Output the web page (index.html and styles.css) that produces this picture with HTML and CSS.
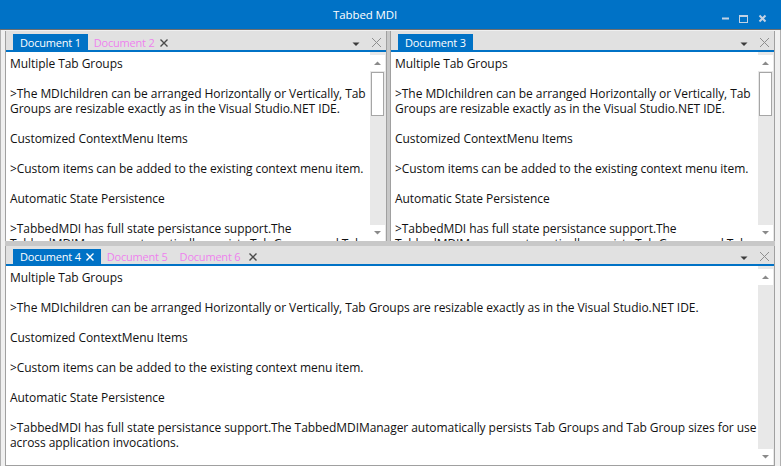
FILE: index.html
```html
<!DOCTYPE html>
<html>
<head>
<meta charset="utf-8">
<link rel="stylesheet" href="styles.css">
</head>
<body>
<div class="window">
  <div class="titlebar">
    <span class="title">Tabbed MDI</span>
    <div class="caption">
      <div class="cbtn"><svg width="19" height="15" viewBox="0 0 19 15"><rect x="7" y="6.5" width="7" height="2" fill="#c2d2e4"/></svg></div>
      <div class="cbtn"><svg width="19" height="15" viewBox="0 0 19 15"><rect x="5.5" y="4.5" width="8" height="7" fill="none" stroke="#c2d2e4" stroke-width="1"/><rect x="5" y="4" width="9" height="2" fill="#c2d2e4"/></svg></div>
      <div class="cbtn"><svg width="19" height="15" viewBox="0 0 19 15"><path d="M6.5 4.5 L12.5 10.5 M12.5 4.5 L6.5 10.5" stroke="#c2d2e4" stroke-width="2" fill="none"/></svg></div>
    </div>
  </div>
  <div class="client">
    <div class="top-row">
      <div class="group left">
        <div class="strip">
          <div class="tab active">Document 1</div>
          <div class="tab inactive">Document 2<svg class="tx" width="8" height="8" viewBox="0 0 8 8"><path d="M0.5 0.5 L7.5 7.5 M7.5 0.5 L0.5 7.5" stroke="#4a4a4a" stroke-width="1.4" fill="none"/></svg></div>
          <div class="strip-fill"></div>
          <div class="sctl"><svg width="20" height="16" viewBox="0 0 20 16"><polygon points="6.5,8.5 13.5,8.5 10,12" fill="#3c3c3c"/></svg></div>
          <div class="sctl"><svg width="20" height="16" viewBox="0 0 20 16"><path d="M6 4 L15 13 M15 4 L6 13" stroke="#8e8e8e" stroke-width="1" fill="none"/></svg></div>
        </div>
        <div class="bar"></div>
        <div class="pane">
          <div class="text">
            <p>Multiple Tab Groups</p>
            <p>&gt;The MDIchildren can be arranged Horizontally or Vertically, Tab Groups are resizable exactly as in the Visual Studio.NET IDE.</p>
            <p>Customized ContextMenu Items</p>
            <p>&gt;Custom items can be added to the existing context menu item.</p>
            <p>Automatic State Persistence</p>
            <p>&gt;TabbedMDI has full state persistance support.The TabbedMDIManager automatically persists Tab Groups and Tab Group sizes for use across application invocations.</p>
          </div>
          <div class="scrollbar">
            <div class="sbtn"><svg width="15" height="16" viewBox="0 0 15 16"><polygon points="4,10 11,10 7.5,6.5" fill="#8a8a8a"/></svg></div>
            <div class="thumb"></div>
            <div class="track"></div>
            <div class="sbtn"><svg width="15" height="16" viewBox="0 0 15 16"><polygon points="4,6 11,6 7.5,9.5" fill="#8a8a8a"/></svg></div>
          </div>
        </div>
      </div>
      <div class="vsplit"></div>
      <div class="group">
        <div class="strip">
          <div class="tab active">Document 3</div>
          <div class="strip-fill"></div>
          <div class="sctl"><svg width="20" height="16" viewBox="0 0 20 16"><polygon points="6.5,8.5 13.5,8.5 10,12" fill="#3c3c3c"/></svg></div>
          <div class="sctl"><svg width="20" height="16" viewBox="0 0 20 16"><path d="M6 4 L15 13 M15 4 L6 13" stroke="#8e8e8e" stroke-width="1" fill="none"/></svg></div>
        </div>
        <div class="bar"></div>
        <div class="pane">
          <div class="text">
            <p>Multiple Tab Groups</p>
            <p>&gt;The MDIchildren can be arranged Horizontally or Vertically, Tab Groups are resizable exactly as in the Visual Studio.NET IDE.</p>
            <p>Customized ContextMenu Items</p>
            <p>&gt;Custom items can be added to the existing context menu item.</p>
            <p>Automatic State Persistence</p>
            <p>&gt;TabbedMDI has full state persistance support.The TabbedMDIManager automatically persists Tab Groups and Tab Group sizes for use across application invocations.</p>
          </div>
          <div class="scrollbar">
            <div class="sbtn"><svg width="15" height="16" viewBox="0 0 15 16"><polygon points="4,10 11,10 7.5,6.5" fill="#8a8a8a"/></svg></div>
            <div class="thumb"></div>
            <div class="track"></div>
            <div class="sbtn"><svg width="15" height="16" viewBox="0 0 15 16"><polygon points="4,6 11,6 7.5,9.5" fill="#8a8a8a"/></svg></div>
          </div>
        </div>
      </div>
    </div>
    <div class="hsplit"></div>
    <div class="group bottom">
      <div class="strip short">
        <div class="tab active">Document 4<svg class="tx" width="8" height="8" viewBox="0 0 8 8"><path d="M0.5 0.5 L7.5 7.5 M7.5 0.5 L0.5 7.5" stroke="#ffffff" stroke-width="1.4" fill="none"/></svg></div>
        <div class="tab inactive">Document 5</div>
        <div class="tab inactive">Document 6<svg class="tx wide" width="8" height="8" viewBox="0 0 8 8"><path d="M0.5 0.5 L7.5 7.5 M7.5 0.5 L0.5 7.5" stroke="#4a4a4a" stroke-width="1.4" fill="none"/></svg></div>
        <div class="strip-fill"></div>
        <div class="sctl"><svg width="20" height="16" viewBox="0 0 20 16"><polygon points="6.5,8.5 13.5,8.5 10,12" fill="#3c3c3c"/></svg></div>
        <div class="sctl"><svg width="20" height="16" viewBox="0 0 20 16"><path d="M6 4 L15 13 M15 4 L6 13" stroke="#8e8e8e" stroke-width="1" fill="none"/></svg></div>
      </div>
      <div class="bar"></div>
      <div class="pane">
        <div class="text">
          <p>Multiple Tab Groups</p>
          <p>&gt;The MDIchildren can be arranged Horizontally or Vertically, Tab Groups are resizable exactly as in the Visual Studio.NET IDE.</p>
          <p>Customized ContextMenu Items</p>
          <p>&gt;Custom items can be added to the existing context menu item.</p>
          <p>Automatic State Persistence</p>
          <p>&gt;TabbedMDI has full state persistance support.The TabbedMDIManager automatically persists Tab Groups and Tab Group sizes for use across application invocations.</p>
        </div>
        <div class="scrollbar">
          <div class="sbtn"><svg width="15" height="16" viewBox="0 0 15 16"><polygon points="4,10 11,10 7.5,6.5" fill="#8a8a8a"/></svg></div>
          <div class="track"></div>
          <div class="sbtn"><svg width="15" height="16" viewBox="0 0 15 16"><polygon points="4,6 11,6 7.5,9.5" fill="#8a8a8a"/></svg></div>
        </div>
      </div>
    </div>
  </div>
</div>
</body>
</html>
```

FILE: styles.css
```css
* { box-sizing: border-box; }
html, body { margin: 0; padding: 0; background: #ffffff; }
body { width: 782px; height: 466px; overflow: hidden; font-family: "Open Sans", sans-serif; }

.window { width: 781px; height: 464px; display: flex; flex-direction: column; }

.titlebar {
  height: 30px;
  flex: none;
  background: #0072c6;
  border-bottom: 1px solid #6e6e6e;
  display: flex;
  align-items: flex-start;
  color: #ffffff;
}
.title {
  margin-left: 333px;
  padding-top: 8px;
  font-size: 11.5px;
  line-height: 14px;
  letter-spacing: -0.1px;
}
.caption { margin-left: auto; display: flex; padding-top: 11px; padding-right: 9px; }
.cbtn { width: 19px; height: 15px; display: flex; }

.client {
  flex: 1;
  display: flex;
  flex-direction: column;
  background: #f0f0f0;
  border: 1px solid #b0b0b0;
  border-top: none;
  padding: 1px 5px 5px 4px;
}
.top-row { height: 210px; flex: none; display: flex; }
.group {
  flex: 1;
  min-width: 0;
  display: flex;
  flex-direction: column;
  border-left: 1px solid #a0a0a0;
  border-right: 1px solid #a0a0a0;
}
.group.left { flex: none; width: 382px; }
.group.bottom { border-bottom: 1px solid #a0a0a0; }
.vsplit { width: 3px; flex: none; background: #c8c8c8; }
.hsplit { height: 5px; flex: none; background: #c8c8c8; }

.strip {
  height: 19px;
  flex: none;
  background: #e1e1e1;
  display: flex;
  align-items: flex-end;
  padding-left: 7px;
}
.strip.short { height: 18px; }
.tab {
  height: 16px;
  padding: 0 7px;
  display: flex;
  align-items: flex-end;
  font-size: 11px;
  line-height: 14px;
  letter-spacing: -0.2px;
  white-space: nowrap;
}
.strip.short .tab { height: 15px; }
.tab.active { background: #0072c6; color: #ffffff; }
.tab.inactive { color: #ee82ee; padding: 0 6px; }
.tx { margin-left: 5px; margin-bottom: 3px; flex: none; }
.tx.wide { margin-left: 9px; }
.strip-fill { flex: 1; }
.sctl { width: 20px; height: 16px; flex: none; display: flex; }

.bar { height: 2px; flex: none; background: #0072c6; }

.pane { flex: 1; min-height: 0; display: flex; background: #ffffff; }
.text {
  flex: 1;
  min-width: 0;
  overflow: hidden;
  padding: 4px 0 0 4px;
  font-size: 12px;
  line-height: 15px;
  letter-spacing: -0.06px;
  color: #111111;
}
.text p { margin: 0 0 15px 0; }

.scrollbar {
  width: 16px;
  flex: none;
  background: #e8e8e8;
  display: flex;
  flex-direction: column;
  padding-top: 3px;
}
.sbtn { width: 15px; height: 16px; flex: none; background: #ffffff; display: flex; }
.thumb {
  width: 13px;
  height: 44px;
  flex: none;
  margin: 1px 0 0 1px;
  background: #ffffff;
  border: 1px solid #a6a6a6;
}
.track { flex: 1; }
```
